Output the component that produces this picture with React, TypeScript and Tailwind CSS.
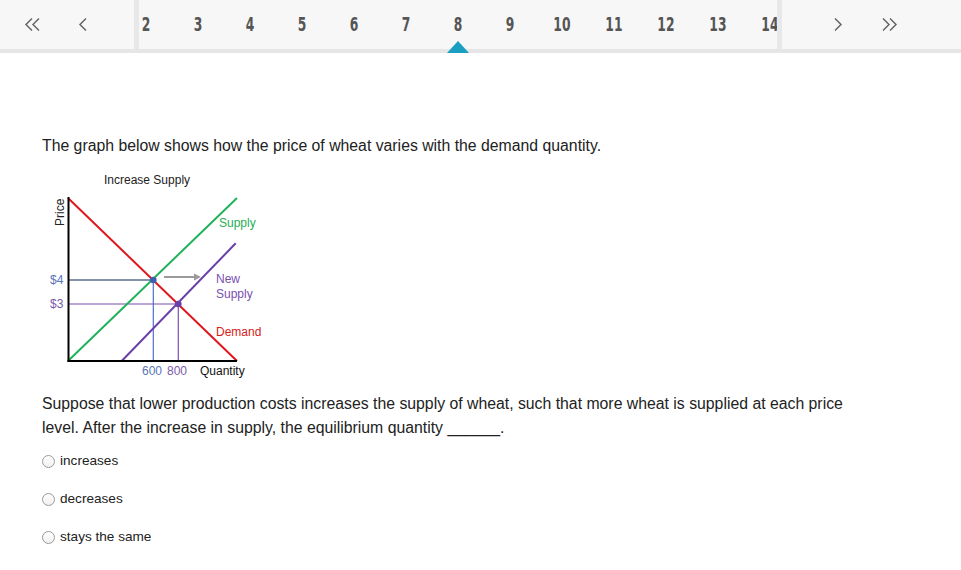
const PAGES = [2, 3, 4, 5, 6, 7, 8, 9, 10, 11, 12, 13, 14];
const ACTIVE = 8;

function Chevron({ dir, double }: { dir: "left" | "right"; double?: boolean }) {
  const w = double ? 18 : 10;
  const pts = (x: number) =>
    dir === "left" ? `${x + 6},0.5 ${x},6.5 ${x + 6},12.5` : `${x},0.5 ${x + 6},6.5 ${x},12.5`;
  return (
    <svg width={w} height={13} viewBox={`0 0 ${w} 13`} fill="none" stroke="#666" strokeWidth={1.5}>
      {double ? (
        <>
          <polyline points={pts(2)} />
          <polyline points={pts(9)} />
        </>
      ) : (
        <polyline points={pts(2)} />
      )}
    </svg>
  );
}

function Graph() {
  // page coords minus the svg's top-left corner (40, 170)
  const X = (x: number) => x - 40;
  const Y = (y: number) => y - 170;
  return (
    <svg width={232} height={215} className="-ml-[2px] block" style={{ fontFamily: "'Liberation Sans', Arial, sans-serif" }}>
      <text x={X(104)} y={Y(184)} fontSize={12} fill="#222">Increase Supply</text>
      <text transform={`translate(${X(64)},${Y(226)}) rotate(-90)`} fontSize={12} fill="#222">Price</text>
      {/* guide lines */}
      <line x1={X(68)} y1={Y(280)} x2={X(153)} y2={Y(280)} stroke="#5b6f8e" strokeWidth={1.5} />
      <line x1={X(153.3)} y1={Y(280)} x2={X(153.3)} y2={Y(361)} stroke="#4f6fd0" strokeWidth={1.2} />
      <line x1={X(68)} y1={Y(304)} x2={X(178)} y2={Y(304)} stroke="#7b4fb0" strokeWidth={1.2} />
      <line x1={X(178.3)} y1={Y(304)} x2={X(178.3)} y2={Y(361)} stroke="#7b4fb0" strokeWidth={1.2} />
      {/* curves */}
      <line x1={X(68)} y1={Y(361)} x2={X(237)} y2={Y(198)} stroke="#1fb25a" strokeWidth={2} />
      <line x1={X(121.7)} y1={Y(361)} x2={X(235.7)} y2={Y(243.3)} stroke="#6a3fa8" strokeWidth={2} />
      <line x1={X(68)} y1={Y(198)} x2={X(237)} y2={Y(361)} stroke="#e0161e" strokeWidth={2} />
      {/* axes */}
      <line x1={X(68.5)} y1={Y(197)} x2={X(68.5)} y2={Y(362)} stroke="#000" strokeWidth={2} />
      <line x1={X(67.5)} y1={Y(361)} x2={X(237)} y2={Y(361)} stroke="#000" strokeWidth={2} />
      {/* points */}
      <circle cx={X(153.3)} cy={Y(280)} r={3.3} fill="#3d5fb0" />
      <circle cx={X(178.3)} cy={Y(304)} r={3.3} fill="#6a3fa8" />
      {/* shift arrow */}
      <line x1={X(164)} y1={Y(277)} x2={X(196)} y2={Y(277)} stroke="#9a9a9a" strokeWidth={2} />
      <polygon points={`${X(194)},${Y(273.5)} ${X(201)},${Y(277)} ${X(194)},${Y(280.5)}`} fill="#9a9a9a" />
      {/* labels */}
      <text x={X(50)} y={Y(284)} fontSize={12} fill="#5a74b8">$4</text>
      <text x={X(50)} y={Y(308)} fontSize={12} fill="#7a5aa8">$3</text>
      <text x={X(219)} y={Y(227)} fontSize={12} fill="#1fae55">Supply</text>
      <text x={X(216)} y={Y(283)} fontSize={12} fill="#7a4fb0">New</text>
      <text x={X(216)} y={Y(298)} fontSize={12} fill="#7a4fb0">Supply</text>
      <text x={X(216)} y={Y(336)} fontSize={12} fill="#d61a20">Demand</text>
      <text x={X(142)} y={Y(375)} fontSize={12} fill="#5a74b8">600</text>
      <text x={X(167)} y={Y(375)} fontSize={12} fill="#7a5aa8">800</text>
      <text x={X(200)} y={Y(375)} fontSize={12} fill="#111">Quantity</text>
    </svg>
  );
}

function Radio({ label }: { label: string }) {
  return (
    <label className="flex h-[38px] items-center gap-[5px]">
      <span className="h-[13px] w-[13px] rounded-full border border-[#9a9a9a] bg-gradient-to-b from-white to-[#f0f0f0]" />
      <span className="text-[13.6px] text-[#222]">{label}</span>
    </label>
  );
}

export default function App() {
  return (
    <div className="min-h-[570px] bg-white" style={{ fontFamily: "'Liberation Sans', Arial, sans-serif" }}>
      <nav className="flex h-[53px] border-b-4 border-[#e6e6e6] bg-[#f7f7f7]">
        <div className="flex w-[134px] items-center">
          <span className="ml-[24px] flex"><Chevron dir="left" double /></span>
          <span className="ml-[36px] flex"><Chevron dir="left" /></span>
        </div>
        <div className="w-[5px] bg-[#e8e8e8]" />
        <div className="relative w-[638px]">
          <div className="-ml-[19px] flex h-full">
            {PAGES.map((p) => (
              <div
                key={p}
                className="relative flex w-[52px] shrink-0 items-center justify-center text-[19px] font-bold text-[#555]"
                style={{ fontFamily: "'DejaVu Sans Condensed', 'Liberation Sans Narrow', 'Roboto Condensed', Roboto, sans-serif" }}
              >
                <span className="inline-block scale-x-[0.72]">{p}</span>
                {p === ACTIVE && (
                  <svg width={22} height={12} viewBox="0 0 22 12" className="absolute bottom-[-4px] left-[15px]">
                    <polygon points="0,12 11,0 22,12" fill="#1a9fc2" />
                  </svg>
                )}
              </div>
            ))}
          </div>
        </div>
        <div className="relative w-[5px] bg-[#e8e8e8]" />
        <div className="flex flex-1 items-center">
          <span className="ml-[51px] flex"><Chevron dir="right" /></span>
          <span className="ml-[38px] flex"><Chevron dir="right" double /></span>
        </div>
      </nav>
      <main className="pl-[42px] text-[#222]">
        <p className="mt-[83px] text-[15.8px] leading-[20px]">
          The graph below shows how the price of wheat varies with the demand quantity.
        </p>
        <div className="mt-[14px]">
          <Graph />
        </div>
        <p className="mt-[7px] w-[815px] text-[15.8px] leading-[24px]">
          Suppose that lower production costs increases the supply of wheat, such that more wheat is supplied at each price
          level. After the increase in supply, the equilibrium quantity ______.
        </p>
        <div className="mt-[2px] flex flex-col">
          <Radio label="increases" />
          <Radio label="decreases" />
          <Radio label="stays the same" />
        </div>
      </main>
    </div>
  );
}
